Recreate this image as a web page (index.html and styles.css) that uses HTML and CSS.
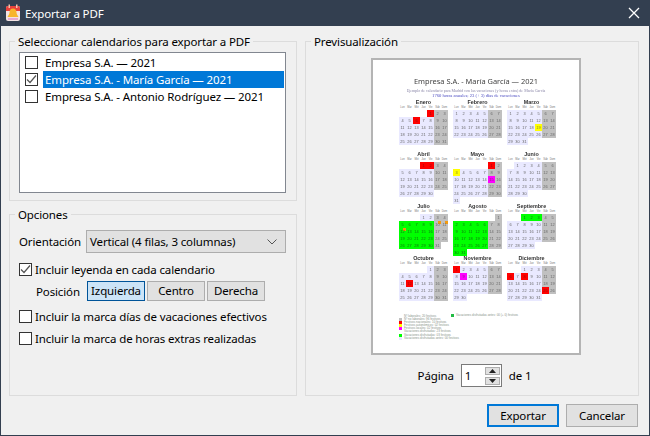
FILE: index.html
```html
<!DOCTYPE html>
<html lang="es">
<head>
<meta charset="utf-8">
<title>Exportar a PDF</title>
<link rel="stylesheet" href="styles.css">
</head>
<body>
<div class="window">
  <header class="titlebar">
    <svg class="app-icon" width="16" height="18" viewBox="0 0 16 18"><rect x="1" y="2" width="14" height="15" rx="2" fill="#f3e3e3"/><path d="M1 7V4a2 2 0 0 1 2-2h10a2 2 0 0 1 2 2v3z" fill="#e8413c"/><rect x="3.500" y="0.500" width="1.500" height="3.500" fill="#f2c4b0"/><rect x="11" y="0.500" width="1.500" height="3.500" fill="#f2c4b0"/><path d="M8 4.500c-2.500 0-3.500 2-3.500 4 0 2-1.500 3-2 4.500h11c-.5-1.500-2-2.500-2-4.500 0-2-1-4-3.500-4z" fill="#f7b52c"/><rect x="3" y="14" width="10" height="2" fill="#e6a8d0"/></svg>
    <span class="title">Exportar a PDF</span>
    <svg class="close" width="12" height="12" viewBox="0 0 12 12"><path d="M1 1l10 10M11 1L1 11" stroke="#fff" stroke-width="1.300" fill="none"/></svg>
  </header>
  <main class="content">
    <div class="columns">
      <div class="left">
        <fieldset class="group group-cal">
          <legend>Seleccionar calendarios para exportar a PDF</legend>
          <div class="group-cal-body">
            <ul class="list">
              <li class="item"><span class="box"></span><span class="item-text">Empresa S.A. — 2021</span></li>
              <li class="item"><span class="box box-checked"><svg width="11" height="11" viewBox="0 0 11 11"><path d="M1 5.500l3 3 6-7" stroke="#555" stroke-width="1.200" fill="none"/></svg></span><span class="item-text selected">Empresa S.A. - María García — 2021</span></li>
              <li class="item"><span class="box"></span><span class="item-text">Empresa S.A. - Antonio Rodríguez — 2021</span></li>
            </ul>
          </div>
        </fieldset>
        <fieldset class="group group-opt">
          <legend>Opciones</legend>
          <div class="opt-body">
            <div class="orient">
              <span>Orientación</span>
              <div class="select"><span>Vertical (4 filas, 3 columnas)</span>
                <svg width="10" height="6" viewBox="0 0 10 6"><path d="M.5.500L5 5 9.500.500" stroke="#555" fill="none"/></svg>
              </div>
            </div>
            <label class="check check-legend"><span class="box box-checked"><svg width="11" height="11" viewBox="0 0 11 11"><path d="M1 5.500l3 3 6-7" stroke="#555" stroke-width="1.200" fill="none"/></svg></span>Incluir leyenda en cada calendario</label>
            <div class="position">
              <span class="pos-label">Posición</span>
              <button class="btn btn-pos btn-active">Izquierda</button>
              <button class="btn btn-pos">Centro</button>
              <button class="btn btn-pos">Derecha</button>
            </div>
            <label class="check check-vac"><span class="box"></span>Incluir la marca días de vacaciones efectivos</label>
            <label class="check check-extra"><span class="box"></span>Incluir la marca de horas extras realizadas</label>
          </div>
        </fieldset>
      </div>
      <fieldset class="group group-prev">
        <legend>Previsualización</legend>
        <div class="prev-body">
          <div class="page">
            <div class="page-title">Empresa S.A. - María García — 2021</div>
            <div class="page-sub">Ejemplo de calendario para Madrid con las vacaciones (y horas extra) de María García</div>
            <div class="page-hours">1760 horas anuales; 23 (+ 3) días de vacaciones</div>
            <div class="months">
              <section class="month"><h4>Enero</h4><div class="dows"><span>Lun</span><span>Mar</span><span>Mié</span><span>Jue</span><span>Vie</span><span>Sáb</span><span>Dom</span></div><div class="days"><i class="s4 r">1</i><i class="w">2</i><i class="w">3</i><i>4</i><i>5</i><i class="r">6</i><i>7</i><i>8</i><i class="w">9</i><i class="w">10</i><i>11</i><i>12</i><i>13</i><i>14</i><i>15</i><i class="w">16</i><i class="w">17</i><i>18</i><i>19</i><i>20</i><i>21</i><i>22</i><i class="w">23</i><i class="w">24</i><i>25</i><i>26</i><i>27</i><i>28</i><i>29</i><i class="w">30</i><i class="w">31</i></div></section>
              <section class="month"><h4>Febrero</h4><div class="dows"><span>Lun</span><span>Mar</span><span>Mié</span><span>Jue</span><span>Vie</span><span>Sáb</span><span>Dom</span></div><div class="days"><i>1</i><i>2</i><i>3</i><i>4</i><i>5</i><i class="w">6</i><i class="w">7</i><i>8</i><i>9</i><i>10</i><i>11</i><i>12</i><i class="w">13</i><i class="w">14</i><i>15</i><i>16</i><i>17</i><i>18</i><i>19</i><i class="w">20</i><i class="w">21</i><i>22</i><i>23</i><i>24</i><i>25</i><i>26</i><i class="w">27</i><i class="w">28</i></div></section>
              <section class="month"><h4>Marzo</h4><div class="dows"><span>Lun</span><span>Mar</span><span>Mié</span><span>Jue</span><span>Vie</span><span>Sáb</span><span>Dom</span></div><div class="days"><i>1</i><i>2</i><i>3</i><i>4</i><i>5</i><i class="w">6</i><i class="w">7</i><i>8</i><i>9</i><i>10</i><i>11</i><i>12</i><i class="w">13</i><i class="w">14</i><i>15</i><i>16</i><i>17</i><i>18</i><i class="y">19</i><i class="w">20</i><i class="w">21</i><i>22</i><i>23</i><i>24</i><i>25</i><i>26</i><i class="w">27</i><i class="w">28</i><i>29</i><i>30</i><i>31</i></div></section>
              <section class="month"><h4>Abril</h4><div class="dows"><span>Lun</span><span>Mar</span><span>Mié</span><span>Jue</span><span>Vie</span><span>Sáb</span><span>Dom</span></div><div class="days"><i class="s3 r">1</i><i class="r">2</i><i class="w">3</i><i class="w">4</i><i>5</i><i>6</i><i>7</i><i>8</i><i>9</i><i class="w">10</i><i class="w">11</i><i>12</i><i>13</i><i>14</i><i>15</i><i>16</i><i class="w">17</i><i class="w">18</i><i>19</i><i>20</i><i>21</i><i>22</i><i>23</i><i class="w">24</i><i class="w">25</i><i>26</i><i>27</i><i>28</i><i>29</i><i>30</i></div></section>
              <section class="month"><h4>Mayo</h4><div class="dows"><span>Lun</span><span>Mar</span><span>Mié</span><span>Jue</span><span>Vie</span><span>Sáb</span><span>Dom</span></div><div class="days"><i class="s5 r">1</i><i class="w">2</i><i class="y">3</i><i>4</i><i>5</i><i>6</i><i>7</i><i class="w">8</i><i class="w">9</i><i>10</i><i>11</i><i>12</i><i>13</i><i>14</i><i class="m">15</i><i class="w">16</i><i>17</i><i>18</i><i>19</i><i>20</i><i>21</i><i class="w">22</i><i class="w">23</i><i>24</i><i>25</i><i>26</i><i>27</i><i>28</i><i class="w">29</i><i class="w">30</i><i>31</i></div></section>
              <section class="month"><h4>Junio</h4><div class="dows"><span>Lun</span><span>Mar</span><span>Mié</span><span>Jue</span><span>Vie</span><span>Sáb</span><span>Dom</span></div><div class="days"><i class="s1">1</i><i>2</i><i>3</i><i>4</i><i class="w">5</i><i class="w">6</i><i>7</i><i>8</i><i>9</i><i>10</i><i>11</i><i class="w">12</i><i class="w">13</i><i>14</i><i>15</i><i>16</i><i>17</i><i>18</i><i class="w">19</i><i class="w">20</i><i>21</i><i>22</i><i>23</i><i>24</i><i>25</i><i class="w">26</i><i class="w">27</i><i>28</i><i>29</i><i>30</i></div></section>
              <section class="month"><h4>Julio</h4><div class="dows"><span>Lun</span><span>Mar</span><span>Mié</span><span>Jue</span><span>Vie</span><span>Sáb</span><span>Dom</span></div><div class="days"><i class="s3">1</i><i>2</i><i class="w">3</i><i class="w">4</i><i class="g">5</i><i class="g">6</i><i class="g">7</i><i class="g">8</i><i class="g">9</i><i class="w o">10</i><i class="w o">11</i><i class="g o">12</i><i class="g">13</i><i class="g">14</i><i class="g">15</i><i class="g">16</i><i class="w">17</i><i class="w">18</i><i class="g">19</i><i class="g">20</i><i class="g">21</i><i class="g">22</i><i class="g">23</i><i class="w">24</i><i class="w">25</i><i class="g">26</i><i class="g">27</i><i class="g">28</i><i class="g">29</i><i class="g">30</i><i class="w">31</i></div></section>
              <section class="month"><h4>Agosto</h4><div class="dows"><span>Lun</span><span>Mar</span><span>Mié</span><span>Jue</span><span>Vie</span><span>Sáb</span><span>Dom</span></div><div class="days"><i class="s6 w">1</i><i class="g">2</i><i class="g">3</i><i class="g">4</i><i class="g">5</i><i class="g">6</i><i class="w">7</i><i class="w">8</i><i class="g">9</i><i class="g">10</i><i class="g">11</i><i class="g">12</i><i class="g">13</i><i class="w">14</i><i class="w">15</i><i class="g">16</i><i class="g">17</i><i class="g">18</i><i class="g">19</i><i class="g">20</i><i class="w">21</i><i class="w">22</i><i class="g">23</i><i class="g">24</i><i class="g">25</i><i class="g">26</i><i class="g">27</i><i class="w">28</i><i class="w">29</i><i class="g">30</i><i class="g">31</i></div></section>
              <section class="month"><h4>Septiembre</h4><div class="dows"><span>Lun</span><span>Mar</span><span>Mié</span><span>Jue</span><span>Vie</span><span>Sáb</span><span>Dom</span></div><div class="days"><i class="s2 g">1</i><i class="g">2</i><i class="g">3</i><i class="w">4</i><i class="w">5</i><i>6</i><i>7</i><i>8</i><i>9</i><i>10</i><i class="w">11</i><i class="w">12</i><i>13</i><i>14</i><i>15</i><i>16</i><i>17</i><i class="w">18</i><i class="w">19</i><i>20</i><i>21</i><i>22</i><i>23</i><i>24</i><i class="w">25</i><i class="w">26</i><i>27</i><i>28</i><i>29</i><i>30</i></div></section>
              <section class="month"><h4>Octubre</h4><div class="dows"><span>Lun</span><span>Mar</span><span>Mié</span><span>Jue</span><span>Vie</span><span>Sáb</span><span>Dom</span></div><div class="days"><i class="s4">1</i><i class="w">2</i><i class="w">3</i><i>4</i><i>5</i><i>6</i><i>7</i><i>8</i><i class="w">9</i><i class="w">10</i><i>11</i><i class="r">12</i><i>13</i><i>14</i><i>15</i><i class="w">16</i><i class="w">17</i><i>18</i><i>19</i><i>20</i><i>21</i><i>22</i><i class="w">23</i><i class="w">24</i><i>25</i><i>26</i><i>27</i><i>28</i><i>29</i><i class="w">30</i><i class="w">31</i></div></section>
              <section class="month"><h4>Noviembre</h4><div class="dows"><span>Lun</span><span>Mar</span><span>Mié</span><span>Jue</span><span>Vie</span><span>Sáb</span><span>Dom</span></div><div class="days"><i class="r">1</i><i>2</i><i>3</i><i>4</i><i>5</i><i class="w">6</i><i class="w">7</i><i>8</i><i class="m">9</i><i>10</i><i>11</i><i>12</i><i class="w">13</i><i class="w">14</i><i>15</i><i>16</i><i>17</i><i>18</i><i>19</i><i class="w">20</i><i class="w">21</i><i>22</i><i>23</i><i>24</i><i>25</i><i>26</i><i class="w">27</i><i class="w">28</i><i>29</i><i>30</i></div></section>
              <section class="month"><h4>Diciembre</h4><div class="dows"><span>Lun</span><span>Mar</span><span>Mié</span><span>Jue</span><span>Vie</span><span>Sáb</span><span>Dom</span></div><div class="days"><i class="s2">1</i><i>2</i><i>3</i><i class="w">4</i><i class="w">5</i><i class="r">6</i><i>7</i><i class="r">8</i><i>9</i><i>10</i><i class="w">11</i><i class="w">12</i><i>13</i><i>14</i><i>15</i><i>16</i><i>17</i><i class="w">18</i><i class="w">19</i><i>20</i><i>21</i><i>22</i><i>23</i><i>24</i><i class="r">25</i><i class="w">26</i><i>27</i><i>28</i><i>29</i><i>30</i><i>31</i></div></section>
            </div>
            <div class="legends">
              <ul class="legend-col">
                <li><span class="sw"></span>Nº laborales: 20 festivos</li>
                <li><span class="sw sw-gray"></span>Nº no laborales: 96 festivos</li>
                <li><span class="sw sw-red"></span>Festivos nacionales: 10 festivos</li>
                <li><span class="sw sw-yellow"></span>Festivos autonómicos: 02 festivos</li>
                <li><span class="sw sw-mag"></span>Festivos locales: 02 festivos</li>
                <li><span class="sw"></span>Vacaciones disfrutadas: 23 festivos</li>
                <li><span class="sw sw-green"></span>Vacaciones disfrutadas: 03 festivos</li>
                <li><span class="sw sw-pale"></span>Vacaciones disfrutadas antes: 00 festivos</li>
              </ul>
              <ul class="legend-col legend-col-2">
                <li><span class="sw sw-dark"></span>Vacaciones disfrutadas antes: 00 (+ 0) festivos</li>
              </ul>
            </div>
          </div>
          <div class="pager">
            <span>Página</span>
            <div class="spin"><span class="spin-val">1</span>
              <div class="spin-btns">
                <span class="spin-btn"><svg width="7" height="4" viewBox="0 0 7 4"><path d="M3.500 0L7 4H0z" fill="#222"/></svg></span>
                <span class="spin-btn"><svg width="7" height="4" viewBox="0 0 7 4"><path d="M0 0h7L3.500 4z" fill="#222"/></svg></span>
              </div>
            </div>
            <span>de 1</span>
          </div>
        </div>
      </fieldset>
    </div>
    <footer class="footer">
      <button class="btn btn-main btn-default">Exportar</button>
      <button class="btn btn-main">Cancelar</button>
    </footer>
  </main>
</div>
</body>
</html>
```
FILE: styles.css
```css
* { box-sizing: border-box; }
html, body { margin: 0; padding: 0; }
body { font-family: "Noto Sans", "Open Sans", sans-serif; font-size: 11.500px; letter-spacing: -.13px; color: #000; }
ul { list-style: none; margin: 0; padding: 0; }

.window {
  width: 650px; height: 436px; background: #f0f0f0;
  border: 1px solid #333f50; border-top: 0;
  display: flex; flex-direction: column;
}
.titlebar {
  height: 26px; flex: none; background: #333f50; color: #fff;
  display: flex; align-items: center; padding: 0 9px 0 4px;
}
.app-icon { flex: none; }
.title { margin-left: 4px; flex: 1; }

.content { flex: 1; display: flex; flex-direction: column; padding: 7px 10px 8px 8px; min-height: 0; }
.columns { flex: 1; display: flex; gap: 8px; min-height: 0; }
.left { width: 288px; flex: none; display: flex; flex-direction: column; gap: 5px; }

.group { margin: 0; padding: 0; border: 1px solid #dcdcdc; min-width: 0; }
.group legend { margin-left: 5px; padding: 0 3px; line-height: 18px; height: 16px; white-space: nowrap; }
.group-cal { height: 168px; flex: none; }
.group-opt { flex: 1; }
.group-prev { flex: 1; }
.group-cal-body { padding: 3px 10px 0 9px; }

.list { height: 141px; background: #fff; border: 1px solid #828790; padding: 1px 1px 0; }
.item { height: 17px; display: flex; align-items: center; }
.box { width: 13px; height: 13px; border: 1px solid #333; background: #fff; flex: none; display: flex; align-items: center; justify-content: center; }
.box-checked { background: #fff; }
.item .box { margin: 0 5px 0 4px; }
.item-text { flex: 1; padding-left: 2px; height: 17px; line-height: 17px; white-space: nowrap; }
.selected { background: #0078d7; color: #fff; }

.opt-body { padding: 8px 10px 0 9px; }
.orient { display: flex; align-items: center; height: 23px; }
.orient > span { width: 67px; flex: none; }
.select { flex: 1; height: 23px; background: #e1e1e1; border: 1px solid #adadad; display: flex; align-items: center; justify-content: space-between; padding: 0 8px 0 3px; }

.check { display: flex; align-items: center; gap: 3px; height: 16px; white-space: nowrap; }
.check-legend { margin-top: 8px; }
.check-vac { margin-top: 7px; }
.check-extra { margin-top: 6px; }

.btn { font: inherit; letter-spacing: inherit; color: #000; background: #e1e1e1; border: 1px solid #adadad; padding: 0; margin: 0; border-radius: 0; }
.position { display: flex; align-items: center; gap: 2px; margin-top: 4px; padding-left: 17px; }
.pos-label { width: 49px; flex: none; }
.btn-pos { width: 58px; height: 20px; line-height: 16px; }
.btn-active { background: #cce4f7; border-color: #005499; }

.prev-body { height: 100%; display: flex; flex-direction: column; align-items: center; padding-top: 9px; }
.page {
  width: 210px; height: 297px; flex: none; background: #fff; border: 2px solid #b4b4b4;
  padding: 16px 0 0 26px; font-family: "Liberation Sans", sans-serif; color: #555; letter-spacing: 0;
  overflow: hidden; margin-left: 8px;
}
.page-title { margin: 0 0 1px -26px; text-align: center; font-size: 7.450px; line-height: 11px; color: #444; font-family: "Noto Sans", sans-serif; filter: blur(.25px); }
.page-sub { margin-left: -26px; text-align: center; font-family: "Liberation Serif", serif; font-size: 4px; line-height: 5px; color: #8a86a8; white-space: nowrap; filter: blur(.2px); }
.page-hours { margin-left: -26px; text-align: center; font-family: "Liberation Serif", serif; font-size: 4.600px; line-height: 6px; color: #4a4ac0; filter: blur(.2px); }
.months { display: grid; grid-template-columns: repeat(3, 49px); column-gap: 5px; margin-top: 1px; }
.month { height: 52px; }
.month h4 { margin: 0; height: 6px; line-height: 5px; font-size: 5.400px; font-weight: bold; text-align: center; color: #333; filter: blur(.2px); }
.dows { display: grid; grid-template-columns: repeat(7, 7px); height: 4px; line-height: 4px; font-size: 2.600px; text-align: center; color: #777; }
.days { display: grid; grid-template-columns: repeat(7, 7px); grid-auto-rows: 7px; }
.days i { font-style: normal; font-size: 3.900px; line-height: 7px; text-align: center; background: #e9e9ff; color: #666; filter: blur(.15px); }
.days .w { background: #c0c0c0; }
.days .r { background: #ff0000; color: #8a1010; }
.days .y { background: #ffff00; color: #888820; }
.days .m { background: #ff00ff; color: #802080; }
.days .g { background: #00ff00; color: #107010; }
.days .o { background-image: linear-gradient(#f39a10, #f39a10); background-size: 3px 3px; background-position: top right; background-repeat: no-repeat; }
.days .s1 { grid-column-start: 2; }
.days .s2 { grid-column-start: 3; }
.days .s3 { grid-column-start: 4; }
.days .s4 { grid-column-start: 5; }
.days .s5 { grid-column-start: 6; }
.days .s6 { grid-column-start: 7; }

.legends { display: flex; margin-top: 7px; }
.legend-col { width: 52px; flex: none; }
.legend-col li { height: 3.100px; line-height: 3.100px; font-size: 3px; color: #8a948a; display: flex; white-space: nowrap; }
.sw { width: 3px; height: 3px; margin-right: 2px; flex: none; }
.sw-gray { background: #c0c0c0; }
.sw-red { background: #ff0000; }
.sw-yellow { background: #ffff00; }
.sw-mag { background: #ff00ff; }
.sw-green { background: #00ff00; }
.sw-pale { background: #e9e9ff; }
.sw-dark { background: #22bb44; }
.legend-col-2 { margin-top: -1px; }

.pager { display: flex; align-items: center; justify-content: center; gap: 7px; margin-top: 9px; margin-left: 5px; }
.spin { width: 41px; height: 23px; background: #fff; border: 1px solid #7a7a7a; display: flex; align-items: center; justify-content: space-between; padding: 0 1px 0 3px; }
.spin-btns { display: flex; flex-direction: column; gap: 2px; }
.spin-btn { width: 15px; height: 8px; background: #e1e1e1; border: 1px solid #adadad; display: flex; align-items: center; justify-content: center; }
.spin-val { line-height: 20px; }

.footer { flex: none; display: flex; justify-content: flex-end; gap: 7px; margin-top: 8px; padding-right: 1px; }
.btn-main { width: 72px; height: 23px; }
.btn-default { border: 2px solid #0078d7; }
```
